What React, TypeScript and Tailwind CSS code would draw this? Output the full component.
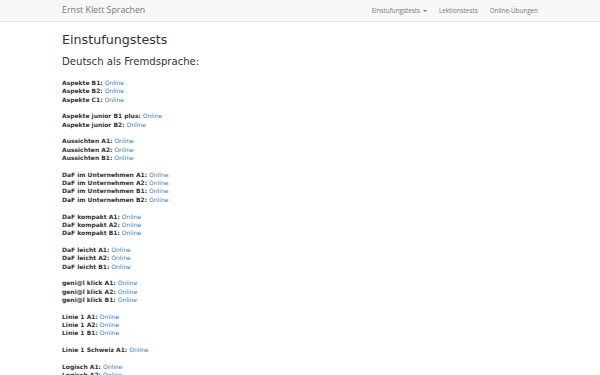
const groups: string[][] = [
  ['Aspekte B1', 'Aspekte B2', 'Aspekte C1'],
  ['Aspekte junior B1 plus', 'Aspekte junior B2'],
  ['Aussichten A1', 'Aussichten A2', 'Aussichten B1'],
  ['DaF im Unternehmen A1', 'DaF im Unternehmen A2', 'DaF im Unternehmen B1', 'DaF im Unternehmen B2'],
  ['DaF kompakt A1', 'DaF kompakt A2', 'DaF kompakt B1'],
  ['DaF leicht A1', 'DaF leicht A2', 'DaF leicht B1'],
  ['geni@l klick A1', 'geni@l klick A2', 'geni@l klick B1'],
  ['Linie 1 A1', 'Linie 1 A2', 'Linie 1 B1'],
  ['Linie 1 Schweiz A1'],
  ['Logisch A1', 'Logisch A2', 'Logisch B1'],
  ['Menschen A1', 'Menschen A2', 'Menschen B1'],
];

function Navbar() {
  return (
    <nav className="h-[22px] bg-[#f8f8f8] border-b border-[#e7e7e7]">
      <div className="mx-auto w-[476px] h-full flex items-center justify-between">
        <a className="text-[8.8px] text-[#777] font-['Open_Sans',sans-serif]">Ernst Klett Sprachen</a>
        <ul className="flex items-center gap-[12px] text-[6.3px] text-[#777] font-['Open_Sans',sans-serif]">
          <li className="flex items-center gap-[3px]">
            Einstufungstests
            <span className="inline-block border-x-[2px] border-x-transparent border-t-[2px] border-t-[#777]" />
          </li>
          <li>Lektionstests</li>
          <li>Online-Übungen</li>
        </ul>
      </div>
    </nav>
  );
}

export default function App() {
  return (
    <div className="h-[375px] overflow-hidden bg-white font-['DejaVu_Sans',sans-serif] text-[#333]">
      <Navbar />
      <div className="mx-auto w-[476px]">
        <h1 className="mt-[10px] text-[12.7px] leading-[15px]">Einstufungstests</h1>
        <h3 className="mt-[8.5px] text-[10.1px] leading-[12px]">Deutsch als Fremdsprache:</h3>
        <div className="mt-[11.5px] flex flex-col gap-[8.35px] text-[6px] leading-[8.35px]">
          {groups.map((group, i) => (
            <div key={i}>
              {group.map((name) => (
                <div key={name}>
                  <b>{name}:</b> <a className="text-[#337ab7]">Online</a>
                </div>
              ))}
            </div>
          ))}
        </div>
      </div>
    </div>
  );
}
